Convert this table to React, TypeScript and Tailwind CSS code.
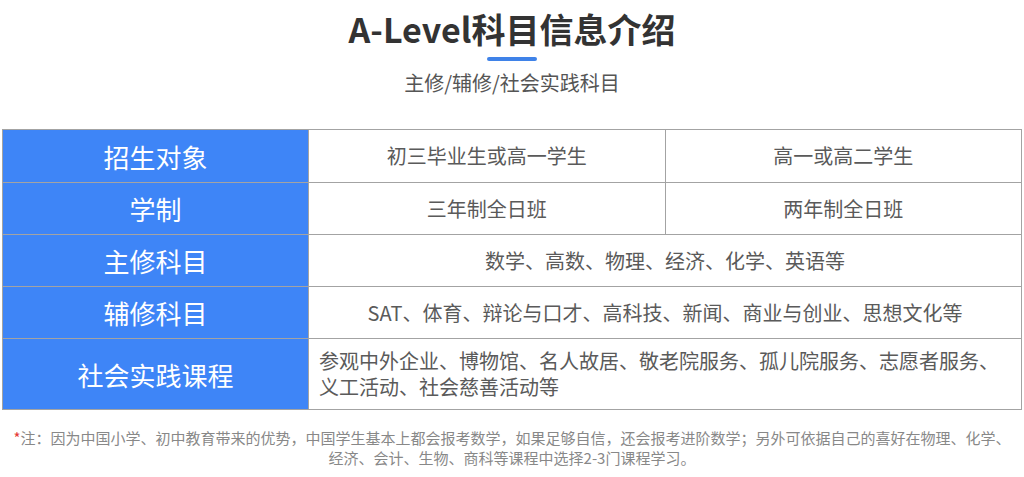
export default function App() {
  const rows = [
    { label: "招生对象", cells: ["初三毕业生或高一学生", "高一或高二学生"] },
    { label: "学制", cells: ["三年制全日班", "两年制全日班"] },
    { label: "主修科目", cells: ["数学、高数、物理、经济、化学、英语等"] },
    { label: "辅修科目", cells: ["SAT、体育、辩论与口才、高科技、新闻、商业与创业、思想文化等"] },
  ];

  return (
    <div
      className="w-[1024px] h-[477px] bg-white overflow-hidden"
      style={{ fontFamily: '"Noto Sans CJK SC", "Noto Sans", sans-serif' }}
    >
      <div className="flex flex-col items-center pt-[6px]">
        <h1 className="text-[34px] leading-[46px] font-bold text-[#333]">A-Level科目信息介绍</h1>
        <div className="mt-[5px] h-[4px] w-[50px] rounded-full bg-[#3f82e8]" />
        <p className="mt-[8px] text-[20px] leading-[28px] text-[#555]">主修/辅修/社会实践科目</p>
      </div>

      <div className="mx-[2px] mt-[32px] border border-[#a3a3a3]">
        {rows.map((row, i) => (
          <div key={row.label} className={`flex h-[52px] ${i > 0 ? "border-t border-[#a3a3a3]" : ""}`}>
            <div className="w-[305px] shrink-0 bg-[#3e85f7] flex items-center justify-center text-white text-[26px]">
              {row.label}
            </div>
            {row.cells.map((c) => (
              <div
                key={c}
                className="flex-1 flex items-center justify-center text-[20px] text-[#5a5a5a] border-l border-[#a3a3a3]"
              >
                {c}
              </div>
            ))}
          </div>
        ))}
        <div className="flex h-[71px] border-t border-[#a3a3a3]">
          <div className="w-[305px] shrink-0 bg-[#3e85f7] flex items-center justify-center text-white text-[26px]">
            社会实践课程
          </div>
          <div className="flex-1 border-l border-[#a3a3a3] flex items-center px-[10px] text-[20px] leading-[26px] text-[#5a5a5a]">
            参观中外企业、博物馆、名人故居、敬老院服务、孤儿院服务、志愿者服务、义工活动、社会慈善活动等
          </div>
        </div>
      </div>

      <p className="mt-[18px] px-[10px] text-center text-[15px] leading-[20px] text-[#888]">
        <span className="text-[#e53935]">*</span>注：因为中国小学、初中教育带来的优势，中国学生基本上都会报考数学，如果足够自信，还会报考进阶数学；另外可依据自己的喜好在物理、化学、经济、会计、生物、商科等课程中选择2-3门课程学习。
      </p>
    </div>
  );
}
